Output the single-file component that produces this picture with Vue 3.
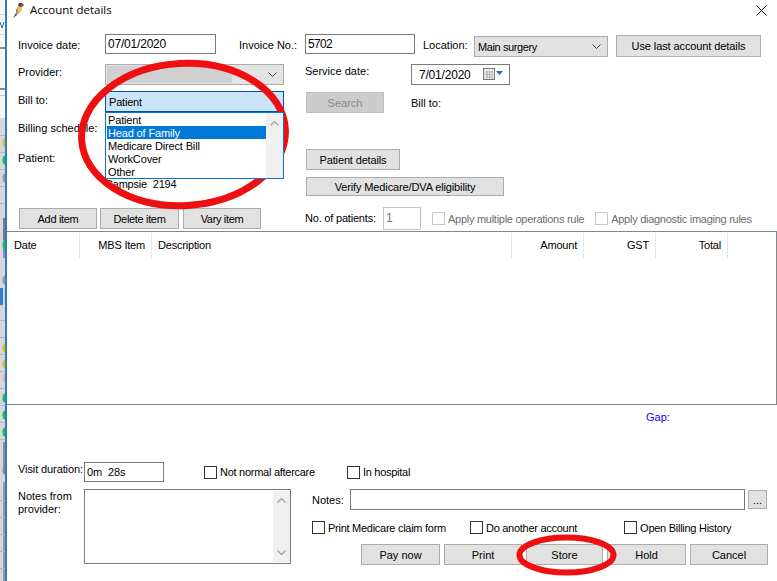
<template>
  <div class="screen">
    <!-- sliver of the window behind the dialog -->
    <svg class="behind" width="5" height="581" viewBox="0 0 5 581">
      <rect width="5" height="581" fill="#f6f6f6" />
      <rect y="118" width="5" height="463" fill="#d6d6dc" />
      <rect y="14" width="5" height="1" fill="#d8d8d8" />
      <path d="M0 22 L2 28 L4 22" stroke="#2070b0" fill="none" />
      <rect y="34" width="5" height="1" fill="#c8d8e8" />
      <rect y="47" width="5" height="2" fill="#8a8a8a" />
      <rect y="88" width="5" height="2" fill="#8a8a8a" />
      <rect y="95" width="5" height="1" fill="#cccccc" />
      <rect x="3" y="218" width="2" height="22" fill="#7a7a7a" />
      <rect x="3" y="240" width="2" height="18" fill="#8a84d8" />
      <rect y="288" width="3" height="17" fill="#2f7fd0" />
      <rect x="3" y="442" width="2" height="26" fill="#8c8c8c" />
      <rect x="3" y="482" width="2" height="99" fill="#9a9a9a" />
      <ellipse v-for="d in dots" :key="d.y" cx="5" :cy="d.y" rx="2.5" ry="4.5" :fill="d.c" />
      <rect v-for="y in rules" :key="y" :y="y" width="5" height="1" fill="#b8b8b8" />
    </svg>

    <div class="dialog">
      <div class="titlebar">
        <svg class="bird" width="14" height="16" viewBox="0 0 14 16">
          <path d="M2 15 L5 10 L4 7 L7 3 L10 3 L10 7 L7 12 L4 13 Z" fill="#d9c489" />
          <path d="M7 5 L10 5 L10 8 L7 11 Z" fill="#e8cc3a" />
          <path d="M7 1 L10 1 L12 3 L9 5 L6 4 Z" fill="#6a3a3a" />
          <path d="M9 1 L11 2 L11 4 L9 4 Z" fill="#b8403c" />
          <path d="M1 16 L4 11 L5 13 Z" fill="#4a4a50" />
          <path d="M4 8 L6 6 L6 11 L4 12 Z" fill="#8f8f8a" />
        </svg>
        <span class="title">Account details</span>
        <svg class="close" width="11" height="11" viewBox="0 0 11 11">
          <path d="M0.5 0.5 L10.5 10.5 M10.5 0.5 L0.5 10.5" stroke="#111" stroke-width="1" fill="none" />
        </svg>
      </div>

      <div class="top">
        <div class="top-left">
          <div class="row row-date">
            <label class="lbl">Invoice date:</label>
            <input class="field w-date" value="07/01/2020" />
          </div>
          <div class="row row-provider">
            <label class="lbl">Provider:</label>
            <div class="combo combo-off">
              <span class="combo-fill"></span>
              <svg class="chev" width="9" height="5" viewBox="0 0 9 5"><path d="M0.5 0.5 L4.5 4.5 L8.5 0.5" stroke="#444" fill="none" /></svg>
            </div>
          </div>
          <div class="row row-billto">
            <label class="lbl">Bill to:</label>
            <div class="combo combo-open">
              <span class="tight">Patient</span>
              <div class="droplist">
                <div class="options">
                  <div
                    v-for="(o, i) in billOptions"
                    :key="o"
                    class="opt"
                    :class="{ 'opt-on': i === 1 }"
                  >{{ o }}</div>
                </div>
                <div class="drop-scroll">
                  <svg width="9" height="5" viewBox="0 0 9 5"><path d="M0.5 4.5 L4.5 0.5 L8.5 4.5" stroke="#a8a8a8" stroke-width="1.5" fill="none" /></svg>
                </div>
              </div>
            </div>
          </div>
          <div class="line line-sched">Billing schedule:</div>
          <div class="line line-patient">Patient:</div>
          <div class="line suburb">Campsie&nbsp; 2194</div>
          <div class="item-btns">
            <button class="btn b-item">Add item</button>
            <button class="btn b-item">Delete item</button>
            <button class="btn b-item">Vary item</button>
          </div>
        </div>

        <div class="top-right">
          <div class="row row-invoice">
            <input class="field w-inv" value="5702" />
            <label class="lbl-loc">Location:</label>
            <div class="combo combo-loc">
              <span class="tighter">Main surgery</span>
              <svg class="chev" width="9" height="5" viewBox="0 0 9 5"><path d="M0.5 0.5 L4.5 4.5 L8.5 0.5" stroke="#444" fill="none" /></svg>
            </div>
            <button class="btn b-last">Use last account details</button>
          </div>
          <div class="row row-service">
            <label class="lbl-service">Service date:</label>
            <div class="picker">
              <span>7/01/2020</span>
              <svg class="cal" width="21" height="13" viewBox="0 0 21 13">
                <rect x="0.5" y="0.5" width="11" height="11" fill="#e8eef2" stroke="#777" />
                <path d="M2 4 H10 M2 6.5 H10 M2 9 H10 M4 3 V11 M6.5 3 V11 M9 3 V11" stroke="#b4b4b4" />
                <path d="M13 3 H20 L16.5 7 Z" fill="#3f5f8f" />
              </svg>
            </div>
          </div>
          <div class="row row-search">
            <button class="btn b-search" disabled>Search</button>
            <span class="lbl-billto">Bill to:</span>
          </div>
          <button class="btn b-details">Patient details</button>
          <button class="btn b-verify">Verify Medicare/DVA eligibility</button>
          <div class="row row-count">
            <label class="lbl-count">No. of patients:</label>
            <input class="field w-count" value="1" disabled />
            <span class="check check-off c-multi"></span>
            <span class="check-text off">Apply multiple operations rule</span>
            <span class="check check-off c-imaging"></span>
            <span class="check-text off">Apply diagnostic imaging rules</span>
          </div>
        </div>
        <label class="lbl-inv">Invoice No.:</label>
      </div>

      <div class="items">
        <div class="items-head">
          <div v-for="c in columns" :key="c.name" class="col" :class="c.cls">{{ c.name }}</div>
        </div>
      </div>

      <div class="gap">Gap:</div>

      <div class="row row-visit">
        <label class="lbl-visit">Visit duration:</label>
        <input class="field w-visit" value="0m  28s" />
        <span class="check c-aftercare"></span>
        <span class="check-text">Not normal aftercare</span>
        <span class="check c-hospital"></span>
        <span class="check-text">In hospital</span>
      </div>

      <div class="lower">
        <div class="lbl-notes">Notes from<br />provider:</div>
        <div class="memo">
          <div class="memo-scroll">
            <svg width="9" height="5" viewBox="0 0 9 5"><path d="M0.5 4.5 L4.5 0.5 L8.5 4.5" stroke="#a8a8a8" stroke-width="1.5" fill="none" /></svg>
            <svg width="9" height="5" viewBox="0 0 9 5"><path d="M0.5 0.5 L4.5 4.5 L8.5 0.5" stroke="#a8a8a8" stroke-width="1.5" fill="none" /></svg>
          </div>
        </div>
        <div class="lower-right">
          <div class="row">
            <label class="lbl-note">Notes:</label>
            <input class="field w-note" />
            <button class="btn b-more">...</button>
          </div>
          <div class="row row-options">
            <span class="check"></span>
            <span class="check-text">Print Medicare claim form</span>
            <span class="check c-another"></span>
            <span class="check-text">Do another account</span>
            <span class="check c-history"></span>
            <span class="check-text">Open Billing History</span>
          </div>
          <div class="row row-actions">
            <button v-for="a in actions" :key="a" class="btn b-action">{{ a }}</button>
          </div>
        </div>
      </div>
    </div>

    <!-- red marker rings drawn over the screenshot -->
    <svg class="marks" width="777" height="581" viewBox="0 0 777 581">
      <ellipse cx="183.5" cy="134.5" rx="102" ry="71" transform="rotate(-3 183.5 134.5)" fill="none" stroke="#ee1010" stroke-width="7" />
      <ellipse cx="566.5" cy="555" rx="47" ry="17.5" fill="none" stroke="#ee1010" stroke-width="6" />
    </svg>
  </div>
</template>

<script setup>
const billOptions = ['Patient', 'Head of Family', 'Medicare Direct Bill', 'WorkCover', 'Other']
const actions = ['Pay now', 'Print', 'Store', 'Hold', 'Cancel']

const columns = [
  { name: 'Date', cls: 'col-date' },
  { name: 'MBS Item', cls: 'col-num' },
  { name: 'Description', cls: 'col-desc' },
  { name: 'Amount', cls: 'col-num' },
  { name: 'GST', cls: 'col-num' },
  { name: 'Total', cls: 'col-num' }
]

const dots = [
  { y: 143, c: '#e8b818' },
  { y: 160, c: '#10c840' },
  { y: 178, c: '#9a9a9a' },
  { y: 245, c: '#10c840' },
  { y: 280, c: '#9a9a9a' },
  { y: 348, c: '#e8b818' },
  { y: 364, c: '#e8b818' },
  { y: 378, c: '#eeb0a0' },
  { y: 398, c: '#10c840' },
  { y: 415, c: '#10c840' },
  { y: 432, c: '#10c840' },
  { y: 470, c: '#8a8a8a' }
]

const rules = [135, 152, 169, 186, 203, 320, 337, 354, 371, 388, 405, 422, 439, 500, 517, 534, 551, 568]
</script>

<style>
body {
  margin: 0;
  background: #fff;
}
</style>

<style scoped>
.screen {
  position: relative;
  display: flex;
  width: 777px;
  height: 581px;
  overflow: hidden;
  font-family: "Liberation Sans", Arial, sans-serif;
  font-size: 11px;
  color: #000;
  background: #fff;
}

.behind {
  flex: none;
}

.dialog {
  flex: 1;
  min-width: 0;
  border-left: 2px solid #2b7cc4;
  background: #fff;
}

.marks {
  position: absolute;
  left: 0;
  top: 0;
  pointer-events: none;
}

.titlebar {
  display: flex;
  align-items: center;
  height: 19px;
  margin-bottom: 15px;
}

.bird {
  flex: none;
  margin-left: 5px;
}

.title {
  margin-left: 4px;
  font-family: "Open Sans", "Noto Sans", sans-serif;
  font-size: 11.5px;
}

.close {
  margin-left: auto;
  margin-right: 10px;
  margin-top: 1px;
}

.row {
  display: flex;
  align-items: center;
}

.tight {
  letter-spacing: -0.2px;
}

.tighter {
  letter-spacing: -0.4px;
}

.top {
  position: relative;
  display: flex;
  height: 197px;
}

.top-left {
  flex: none;
  width: 298px;
  padding-left: 11px;
  box-sizing: border-box;
}

.top-right {
  flex: 1;
  min-width: 0;
}

.lbl {
  flex: none;
  width: 87px;
  position: relative;
}

.row-date .lbl {
  top: 1px;
}

.row-provider .lbl {
  top: -3px;
}

.row-billto .lbl {
  top: -2px;
}

.field {
  box-sizing: border-box;
  height: 20px;
  padding: 0 2px 1px;
  margin: 0;
  border: 1px solid #7a7a7a;
  border-radius: 0;
  outline: none;
  font: 12px "Liberation Sans", Arial, sans-serif;
  color: #000;
  background: #fff;
}

.field:disabled {
  border-color: #c4c4c4;
  color: #777;
  background: #fff;
}

.w-date {
  width: 111px;
  letter-spacing: -0.2px;
}

.row-provider {
  margin-top: 10px;
}

.row-billto {
  margin-top: 6px;
}

.combo {
  position: relative;
  display: flex;
  align-items: center;
  box-sizing: border-box;
  height: 21px;
  border: 1px solid #adadad;
  background: #e1e1e1;
}

.chev {
  position: absolute;
  right: 6px;
  top: 7px;
}

.combo-off {
  width: 179px;
  padding: 1px;
  background: #e3e3e3;
}

.combo-fill {
  width: 125px;
  height: 17px;
  background: #d0d0d0;
}

.combo-open {
  width: 179px;
  padding-left: 3px;
  border-color: #005499;
  background: #cce4f7;
}

.droplist {
  position: absolute;
  left: -1px;
  top: 20px;
  z-index: 2;
  display: flex;
  box-sizing: border-box;
  width: 179px;
  height: 67px;
  border: 1px solid #0078d7;
  background: #fff;
}

.options {
  flex: none;
  width: 160px;
}

.opt {
  height: 13px;
  padding-left: 2px;
  line-height: 14px;
  letter-spacing: -0.15px;
}

.opt-on {
  margin-left: 1px;
  padding-left: 1px;
  color: #fff;
  background: #0078d7;
}

.drop-scroll {
  flex: 1;
  display: flex;
  justify-content: center;
  padding-top: 8px;
  background: #f0f0f0;
}

.line {
  height: 13px;
  line-height: 13px;
}

.line-sched {
  margin-top: 10px;
}

.line-patient {
  margin-top: 17px;
}

.suburb {
  margin-top: 13px;
  padding-left: 87px;
  letter-spacing: -0.2px;
}

.item-btns {
  display: flex;
  gap: 3px;
  margin-top: 17px;
  margin-left: 1px;
}

.btn {
  box-sizing: border-box;
  flex: none;
  height: 21px;
  padding: 0;
  border: 1px solid #adadad;
  border-radius: 0;
  font: 11px "Liberation Sans", Arial, sans-serif;
  color: #000;
  background: #e1e1e1;
}

.btn:disabled {
  border-color: #bfbfbf;
  color: #8a8a8a;
  background: #cccccc;
}

.b-item {
  width: 78px;
  letter-spacing: -0.33px;
}

.b-item:nth-child(2) {
  width: 79px;
}

.b-item:nth-child(3) {
  margin-left: 1px;
}

.lbl-inv {
  position: absolute;
  left: 232px;
  top: 5px;
}

.row-invoice {
  align-items: flex-start;
}

.w-inv {
  width: 110px;
  letter-spacing: -0.7px;
}

.lbl-loc {
  width: 51px;
  margin-left: 8px;
  margin-top: 5px;
}

.combo-loc {
  width: 134px;
  margin-top: 2px;
  padding-left: 3px;
}

.b-last {
  width: 145px;
  height: 22px;
  margin-left: 8px;
  margin-top: 1px;
  letter-spacing: -0.1px;
}

.row-service {
  margin-top: 7px;
}

.lbl-service {
  position: relative;
  top: -4px;
  width: 106px;
}

.picker {
  display: flex;
  align-items: center;
  box-sizing: border-box;
  width: 99px;
  height: 21px;
  padding-left: 7px;
  border: 1px solid #7a7a7a;
  font-size: 12px;
  letter-spacing: -0.2px;
}

.cal {
  margin-left: 12px;
}

.row-search {
  margin-top: 7px;
}

.b-search {
  width: 78px;
  margin-left: 1px;
}

.lbl-billto {
  margin-left: 27px;
}

.b-details {
  display: block;
  width: 94px;
  margin: 36px 0 0 1px;
  letter-spacing: -0.15px;
}

.b-verify {
  display: block;
  width: 198px;
  height: 19px;
  margin: 7px 0 0 1px;
  letter-spacing: -0.13px;
}

.row-count {
  margin-top: 11px;
}

.lbl-count {
  position: relative;
  top: -1px;
  width: 78px;
  letter-spacing: -0.2px;
}

.w-count {
  width: 38px;
  height: 23px;
}

.check {
  flex: none;
  box-sizing: border-box;
  width: 13px;
  height: 13px;
  border: 1px solid #333;
  background: #fff;
}

.check-off {
  border-color: #c8c8c8;
}

.check-text {
  margin-left: 3px;
  white-space: nowrap;
  letter-spacing: -0.27px;
}

.off {
  color: #6d6d6d;
}

.c-multi {
  margin-left: 11px;
}

.c-imaging {
  margin-left: 11px;
}

.items {
  box-sizing: border-box;
  height: 174px;
  border-top: 1px solid #828790;
  border-right: 1px solid #828790;
  border-bottom: 1px solid #828790;
}

.items-head {
  display: grid;
  grid-template-columns: 73px 72px 360px 72px 72px 72px;
  height: 25px;
  margin-top: 1px;
}

.col {
  box-sizing: border-box;
  padding-right: 6px;
  border-right: 1px solid #e5e5e5;
  line-height: 25px;
  letter-spacing: -0.2px;
}

.col-date {
  padding-left: 7px;
}

.col-desc {
  padding-left: 6px;
}

.col-num {
  text-align: right;
}

.gap {
  height: 13px;
  margin-top: 6px;
  padding-left: 639px;
  line-height: 13px;
  color: #2200ee;
}

.row-visit {
  height: 20px;
  margin-top: 38px;
}

.lbl-visit {
  position: relative;
  top: -3px;
  width: 66px;
  margin-left: 11px;
  white-space: nowrap;
  letter-spacing: -0.1px;
}

.w-visit {
  width: 80px;
  font-size: 11px;
  letter-spacing: -0.1px;
}

.c-aftercare {
  margin-left: 40px;
}

.c-hospital {
  margin-left: 32px;
}

.lower {
  display: flex;
  margin-top: 7px;
}

.lbl-notes {
  flex: none;
  width: 66px;
  margin-left: 11px;
  padding-top: 1px;
  line-height: 13px;
}

.memo {
  flex: none;
  position: relative;
  box-sizing: border-box;
  width: 207px;
  height: 75px;
  border: 1px solid #7a7a7a;
}

.memo-scroll {
  position: absolute;
  right: 0;
  top: 1px;
  bottom: 1px;
  display: flex;
  flex-direction: column;
  align-items: center;
  justify-content: space-between;
  box-sizing: border-box;
  width: 17px;
  padding: 7px 0;
  background: #f0f0f0;
}

.lower-right {
  flex: 1;
  min-width: 0;
  padding-left: 21px;
}

.lbl-note {
  width: 38px;
}

.w-note {
  width: 395px;
  height: 21px;
}

.b-more {
  width: 19px;
  height: 19px;
  margin-left: 3px;
}

.row-options {
  margin-top: 11px;
}

.c-another {
  margin-left: 24px;
}

.c-history {
  margin-left: 47px;
}

.row-actions {
  margin-top: 10px;
  margin-left: 49px;
  gap: 4px;
}

.b-action {
  width: 78px;
}

.b-action:nth-child(1),
.b-action:nth-child(4) {
  width: 79px;
}

.b-action:nth-child(3) {
  width: 77px;
}
</style>
